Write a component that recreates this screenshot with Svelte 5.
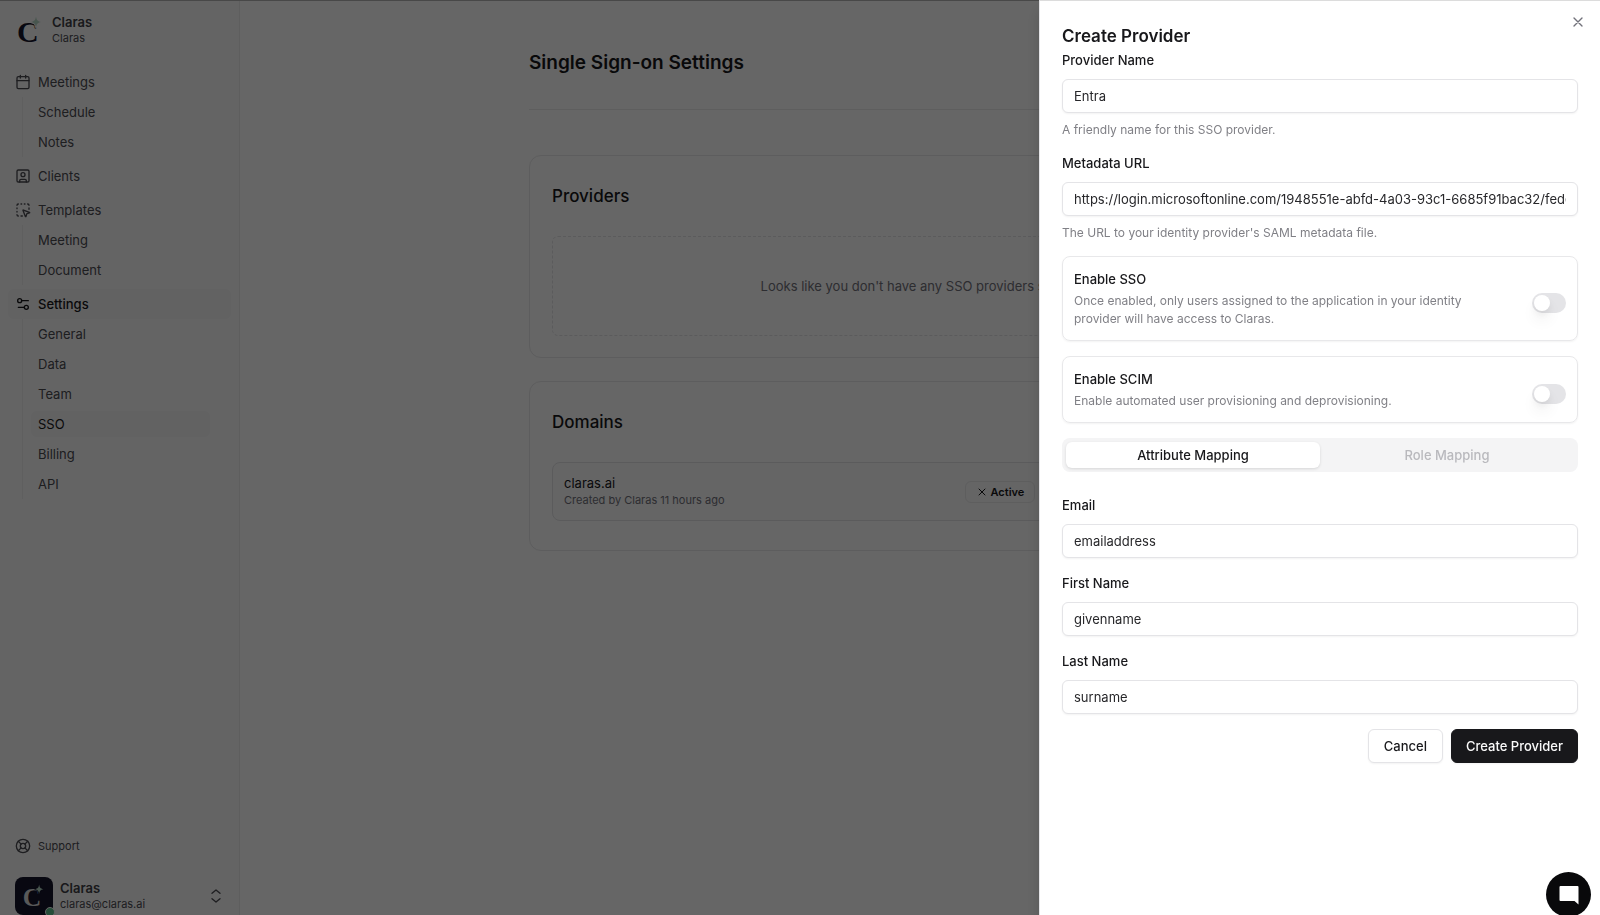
<script lang="ts">
	type NavGroup = { label: string; icon: string; active?: boolean; items: string[] };

	const nav: NavGroup[] = [
		{ label: 'Meetings', icon: 'calendar', items: ['Schedule', 'Notes'] },
		{ label: 'Clients', icon: 'user', items: [] },
		{ label: 'Templates', icon: 'template', items: ['Meeting', 'Document'] },
		{
			label: 'Settings',
			icon: 'settings',
			active: true,
			items: ['General', 'Data', 'Team', 'SSO', 'Billing', 'API']
		}
	];
	const current = 'SSO';

	let name = $state('Entra');
	let metadataUrl = $state(
		'https://login.microsoftonline.com/1948551e-abfd-4a03-93c1-6685f91bac32/federationmetadata/2007-06/federationmetadata.xml'
	);
	let enableSso = $state(false);
	let enableScim = $state(false);
	let tab = $state('attributes');

	let attributes = $state([
		{ id: 'email', label: 'Email', value: 'emailaddress' },
		{ id: 'first-name', label: 'First Name', value: 'givenname' },
		{ id: 'last-name', label: 'Last Name', value: 'surname' }
	]);
</script>

{#snippet icon(kind: string)}
	<svg class="icon" viewBox="0 0 24 24" aria-hidden="true">
		{#if kind === 'calendar'}
			<path d="M8 2v4M16 2v4M3 10h18" />
			<rect x="3" y="4" width="18" height="18" rx="2" />
		{:else if kind === 'user'}
			<rect x="3" y="3" width="18" height="18" rx="2" />
			<circle cx="12" cy="10" r="3" />
			<path d="M7 21v-2a2 2 0 0 1 2-2h6a2 2 0 0 1 2 2v2" />
		{:else if kind === 'template'}
			<path d="M12.034 12.681a.498.498 0 0 1 .647-.647l9 3.5a.5.5 0 0 1-.033.943l-3.444 1.068a1 1 0 0 0-.66.66l-1.067 3.443a.5.5 0 0 1-.943.033z" />
			<path d="M5 3a2 2 0 0 0-2 2M19 3a2 2 0 0 1 2 2M5 21a2 2 0 0 1-2-2M9 3h1M9 21h2M14 3h1M3 9v1M21 9v2M3 14v1" />
		{:else if kind === 'settings'}
			<path d="M20 7h-9M14 17H5" />
			<circle cx="17" cy="17" r="3" />
			<circle cx="7" cy="7" r="3" />
		{:else if kind === 'support'}
			<circle cx="12" cy="12" r="10" />
			<circle cx="12" cy="12" r="4" />
			<path d="m4.93 4.93 4.24 4.24M14.83 9.17l4.24-4.24M14.83 14.83l4.24 4.24M9.17 14.83l-4.24 4.24" />
		{:else if kind === 'updown'}
			<path d="m6 16 6 5 6-5M6 8l6-5 6 5" />
		{:else if kind === 'close'}
			<path d="M18 6 6 18M6 6l12 12" />
		{/if}
	</svg>
{/snippet}

{#snippet mark()}
	<svg class="mark" viewBox="0 0 28 32" aria-hidden="true">
		<text class="mark-letter" x="1" y="28">C</text>
		<path class="mark-star" d="M20 2.500c.6 3.800 1.400 4.600 5 5.500-3.600.9-4.400 1.700-5 5.500-.6-3.800-1.400-4.600-5-5.500 3.600-.9 4.400-1.700 5-5.500z" />
	</svg>
{/snippet}

<div class="app">
	<aside class="sidebar">
		<a class="brand" href="#home">
			{@render mark()}
			<span class="who">
				<strong>Claras</strong>
				<span>Claras</span>
			</span>
		</a>

		<nav class="nav" aria-label="Main">
			{#each nav as group}
				<div class="group">
					<a class="nav-link" class:active={group.active} href="#{group.label}">
						{@render icon(group.icon)}
						{group.label}
					</a>
					{#if group.items.length}
						<ul class="sub">
							{#each group.items as item}
								<li><a class:current={item === current} href="#{item}">{item}</a></li>
							{/each}
						</ul>
					{/if}
				</div>
			{/each}
		</nav>

		<a class="support" href="#support">{@render icon('support')} Support</a>

		<button class="account" type="button">
			<span class="avatar">
				{@render mark()}
				<span class="status"></span>
			</span>
			<span class="who">
				<strong>Claras</strong>
				<span>claras@claras.ai</span>
			</span>
			{@render icon('updown')}
		</button>
	</aside>

	<main class="main">
		<div class="content">
			<h1>Single Sign-on Settings</h1>

			<section class="card">
				<h2>Providers</h2>
				<p class="empty">Looks like you don't have any SSO providers set up.</p>
			</section>

			<section class="card">
				<h2>Domains</h2>
				<div class="domain">
					<div>
						<p class="domain-name">claras.ai</p>
						<p class="domain-meta">Created by Claras 11 hours ago</p>
					</div>
					<span class="badge">{@render icon('close')} Active</span>
				</div>
			</section>
		</div>
	</main>
</div>

<div class="overlay"></div>

<div class="drawer" role="dialog" aria-modal="true" aria-labelledby="drawer-title">
	<button class="close" type="button" aria-label="Close">{@render icon('close')}</button>
	<h2 id="drawer-title">Create Provider</h2>

	<form class="form">
		<div class="field">
			<label for="name">Provider Name</label>
			<input id="name" type="text" bind:value={name} />
			<p class="hint">A friendly name for this SSO provider.</p>
		</div>

		<div class="field">
			<label for="metadata-url">Metadata URL</label>
			<input id="metadata-url" type="text" bind:value={metadataUrl} />
			<p class="hint">The URL to your identity provider's SAML metadata file.</p>
		</div>

		<div class="toggle">
			<div class="toggle-text">
				<label for="sso">Enable SSO</label>
				<p>Once enabled, only users assigned to the application in your identity provider will have access to Claras.</p>
			</div>
			<input id="sso" class="switch" type="checkbox" role="switch" bind:checked={enableSso} />
		</div>

		<div class="toggle">
			<div class="toggle-text">
				<label for="scim">Enable SCIM</label>
				<p>Enable automated user provisioning and deprovisioning.</p>
			</div>
			<input id="scim" class="switch" type="checkbox" role="switch" bind:checked={enableScim} />
		</div>

		<div class="tabs" role="tablist">
			<button type="button" role="tab" aria-selected={tab === 'attributes'} onclick={() => (tab = 'attributes')}>
				Attribute Mapping
			</button>
			<button type="button" role="tab" aria-selected={tab === 'roles'} onclick={() => (tab = 'roles')}>
				Role Mapping
			</button>
		</div>

		{#if tab === 'attributes'}
			<div class="attributes">
				{#each attributes as attr (attr.id)}
					<div class="field">
						<label for={attr.id}>{attr.label}</label>
						<input id={attr.id} type="text" bind:value={attr.value} />
					</div>
				{/each}
			</div>
		{/if}

		<div class="actions">
			<button class="btn" type="button">Cancel</button>
			<button class="btn primary" type="button">Create Provider</button>
		</div>
	</form>
</div>

<button class="chat" type="button" aria-label="Open chat">
	<svg viewBox="0 0 20 20" aria-hidden="true">
		<path d="M1.500 1h17a1 1 0 0 1 1 1v17.500L15.500 16h-14a1 1 0 0 1-1-1V2a1 1 0 0 1 1-1z" />
	</svg>
</button>

<style>
	:global(body) {
		margin: 0;
		background: #fff;
		color: #18181b;
		font: 13px/20px Inter, sans-serif;
	}
	:global(*) { box-sizing: border-box; }

	h1, h2, p, ul { margin: 0; padding: 0; }
	ul { list-style: none; }
	a { color: inherit; text-decoration: none; }
	button, input { font: inherit; color: inherit; margin: 0; }
	button { cursor: pointer; }

	.icon {
		width: 16px;
		height: 16px;
		flex: none;
		fill: none;
		stroke: currentColor;
		stroke-width: 2;
		stroke-linecap: round;
		stroke-linejoin: round;
	}

	/* Shell */
	.app {
		display: flex;
		height: 100vh;
		overflow: hidden;
		border-top: 1px solid #b4b4b4;
	}

	/* Sidebar */
	.sidebar {
		display: flex;
		flex-direction: column;
		flex: none;
		width: 240px;
		background: #fafafa;
		border-right: 1px solid #ebebec;
		color: #4b4b52;
	}
	.brand {
		display: flex;
		gap: 8px;
		padding: 13px 16px 0;
	}
	.who {
		display: flex;
		flex-direction: column;
		flex: 1;
		text-align: left;
		font-size: 11px;
		line-height: 15px;
	}
	.who strong {
		font-size: 13px;
		line-height: 17px;
		font-weight: 600;
		color: #3f3f46;
	}

	.mark {
		width: 28px;
		height: 32px;
		flex: none;
		overflow: visible;
	}
	.mark-letter {
		font: bold 30px "Liberation Serif", serif;
		fill: #14142b;
	}
	/* the outline cuts the star out of the letter */
	.mark-star {
		fill: #b5d6c5;
		stroke: #fafafa;
		stroke-width: 2;
		paint-order: stroke;
	}

	.nav {
		display: flex;
		flex-direction: column;
		gap: 4px;
		padding: 21px 8px 0;
	}
	.nav-link {
		display: flex;
		align-items: center;
		gap: 7px;
		height: 30px;
		padding: 0 7px;
		border-radius: 6px;
	}
	.nav-link.active {
		background: #f4f4f5;
		color: #18181b;
		font-weight: 500;
	}
	.sub {
		margin: 0 21px 0 14px;
		padding-left: 8px;
		border-left: 1px solid #ededee;
	}
	.sub li { padding: 2px 0; }
	.sub a {
		display: block;
		padding: 3px 7px;
		border-radius: 6px;
	}
	.sub .current {
		background: #f4f4f5;
		color: #18181b;
	}

	.support {
		display: flex;
		align-items: center;
		gap: 7px;
		margin-top: auto;
		padding: 0 15px;
		font-size: 11px;
	}
	.account {
		display: flex;
		align-items: center;
		gap: 7px;
		margin-top: 21px;
		padding: 0 15px;
		border: 0;
		background: none;
	}
	.avatar {
		position: relative;
		display: grid;
		place-items: center;
		width: 38px;
		height: 38px;
		border-radius: 8px;
		background: #14142b;
	}
	.avatar .mark { width: 24px; height: 28px; }
	.avatar .mark-letter { fill: #dedede; }
	.avatar .mark-star { stroke: #14142b; }
	.status {
		position: absolute;
		right: -2px;
		bottom: -2px;
		width: 10px;
		height: 10px;
		border: 1px solid #fafafa;
		border-radius: 50%;
		background: #5fc08f;
	}

	/* Page behind the drawer */
	.main { flex: 1; min-width: 0; }
	.content {
		max-width: 782px;
		margin: 0 auto;
		padding-top: 48px;
	}
	h1 {
		padding-bottom: 32px;
		border-bottom: 1px solid #ebebec;
		margin-bottom: 45px;
		font-size: 19px;
		line-height: 28px;
		font-weight: 600;
	}
	.card {
		padding: 26px 22px 21px;
		margin-bottom: 23px;
		border: 1px solid #e8e8ea;
		border-radius: 12px;
	}
	.card h2 {
		margin-bottom: 26px;
		font-size: 17px;
		line-height: 28px;
		font-weight: 500;
	}
	.empty {
		padding: 39px 0;
		border: 1px dashed #e4e4e7;
		border-radius: 6px;
		color: #71717a;
		text-align: center;
	}
	.domain {
		display: grid;
		grid-template-columns: 9fr 7fr;
		align-items: center;
		padding: 12px 11px;
		margin-bottom: 8px;
		border: 1px solid #e4e4e7;
		border-radius: 8px;
		background: #fcfcfc;
	}
	.domain-name { line-height: 17px; }
	.domain-meta {
		font-size: 11px;
		line-height: 16px;
		color: #71717a;
	}
	.badge {
		display: flex;
		align-items: center;
		justify-self: start;
		gap: 3px;
		padding: 1px 10px;
		border: 1px solid #ebebec;
		border-radius: 6px;
		font-size: 11px;
		line-height: 18px;
		font-weight: 600;
	}
	.badge .icon { width: 12px; height: 12px; }

	.overlay {
		position: fixed;
		inset: 0;
		background: rgba(0, 0, 0, 0.6);
	}

	/* Drawer */
	.drawer {
		position: fixed;
		top: 0;
		right: 0;
		bottom: 0;
		width: 561px;
		max-width: 100%;
		padding: 23px 22px 24px;
		border-top: 1px solid #dcdcdc;
		border-left: 1px solid #e4e4e7;
		background: #fff;
		box-shadow: 0 10px 15px rgba(0, 0, 0, 0.15);
		overflow-y: auto;
	}
	.drawer h2 {
		margin-bottom: 2px;
		font-size: 17px;
		line-height: 24px;
		font-weight: 600;
	}
	.close {
		position: absolute;
		top: 13px;
		right: 14px;
		display: flex;
		padding: 0;
		border: 0;
		background: none;
		color: #71717a;
	}
	.form {
		display: flex;
		flex-direction: column;
		gap: 15px;
	}
	.field { display: flex; flex-direction: column; }
	label { font-weight: 500; }
	.field input {
		height: 34px;
		margin-top: 9px;
		padding: 0 11px;
		border: 1px solid #e4e4e7;
		border-radius: 6px;
		background: #fff;
		color: #27272a;
		box-shadow: 0 1px 2px rgba(0, 0, 0, 0.05);
	}
	.hint {
		margin-top: 8px;
		font-size: 12px;
		line-height: 17px;
		color: #808086;
	}

	.toggle {
		display: flex;
		align-items: center;
		justify-content: space-between;
		padding: 12px 11px;
		border: 1px solid #e8e8ea;
		border-radius: 8px;
		box-shadow: 0 1px 2px rgba(0, 0, 0, 0.05);
	}
	.toggle-text { max-width: 400px; }
	.toggle-text p {
		margin-top: 3px;
		font-size: 12px;
		line-height: 18px;
		color: #808086;
	}
	.switch {
		appearance: none;
		flex: none;
		width: 34px;
		height: 20px;
		margin-top: 8px;
		padding: 2px;
		border-radius: 10px;
		background: #e4e4e7;
	}
	.switch::before {
		content: '';
		display: block;
		width: 16px;
		height: 16px;
		border-radius: 50%;
		background: #fff;
		box-shadow: 0 10px 15px rgba(0, 0, 0, 0.06), 0 4px 6px rgba(0, 0, 0, 0.05);
		transition: transform 0.15s;
	}
	.switch:checked { background: #18181b; }
	.switch:checked::before { transform: translateX(14px); }

	.tabs {
		display: grid;
		grid-template-columns: 1fr 1fr;
		padding: 4px;
		border-radius: 8px;
		background: #f4f4f5;
	}
	.tabs button {
		padding: 3px 12px;
		border: 0;
		border-radius: 6px;
		background: none;
		color: #b9b9bd;
		font-weight: 500;
	}
	.tabs button[aria-selected='true'] {
		background: #fff;
		color: #18181b;
		box-shadow: 0 1px 3px rgba(0, 0, 0, 0.12);
	}
	.attributes {
		display: flex;
		flex-direction: column;
		gap: 15px;
		padding-top: 8px;
	}

	.actions {
		display: flex;
		justify-content: flex-end;
		gap: 8px;
	}
	.btn {
		height: 34px;
		padding: 0 15px;
		border: 1px solid #e4e4e7;
		border-radius: 6px;
		background: #fff;
		font-weight: 500;
		box-shadow: 0 1px 2px rgba(0, 0, 0, 0.05);
	}
	.btn.primary {
		padding: 0 14px;
		border-color: #18181b;
		background: #18181b;
		color: #fafafa;
	}

	.chat {
		position: fixed;
		right: 9px;
		bottom: -2px;
		display: grid;
		place-items: center;
		width: 45px;
		height: 45px;
		padding: 0;
		border: 0;
		border-radius: 50%;
		background: #09090b;
	}
	.chat svg { width: 20px; height: 20px; fill: #fff; }
</style>
